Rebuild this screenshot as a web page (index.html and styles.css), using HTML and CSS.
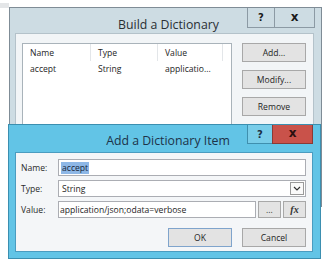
FILE: index.html
```html
<!DOCTYPE html>
<html>
<head>
<meta charset="utf-8">
<link rel="stylesheet" href="styles.css">
</head>
<body>
<div class="desk">
  <div class="strip"></div>
  <div class="win win-back">
    <div class="titlebar">
      <div class="title">Build a Dictionary</div>
      <div class="caps">
        <div class="cap cap-help">?</div>
        <div class="cap cap-close">x</div>
      </div>
    </div>
    <div class="client client-back">
      <div class="list">
        <div class="lrow lhead">
          <div class="c c1">Name</div>
          <div class="c c2">Type</div>
          <div class="c c3">Value</div>
          <div class="c c4"></div>
        </div>
        <div class="lrow">
          <div class="c c1">accept</div>
          <div class="c c2">String</div>
          <div class="c c3">applicatio...</div>
        </div>
      </div>
      <div class="sidebtns">
        <div class="btn">Add...</div>
        <div class="btn">Modify...</div>
        <div class="btn">Remove</div>
      </div>
    </div>
  </div>

  <div class="win win-front">
    <div class="titlebar tb-front">
      <div class="title title-front">Add a Dictionary Item</div>
      <div class="caps caps-front">
        <div class="cap cap-help help-front">?</div>
        <div class="cap cap-close close-front">x</div>
      </div>
    </div>
    <div class="client client-front">
      <div class="frow">
        <div class="lbl">Name:</div>
        <div class="inp"><span class="sel">accept</span></div>
      </div>
      <div class="frow">
        <div class="lbl">Type:</div>
        <div class="inp inp-combo"><span class="ctext">String</span>
          <span class="drop"><svg width="8" height="5" viewBox="0 0 8 5"><path d="M1 1 L4 4 L7 1" fill="none" stroke="#333" stroke-width="1.2"/></svg></span>
        </div>
      </div>
      <div class="frow">
        <div class="lbl">Value:</div>
        <div class="inp inp-val">application/json;odata=verbose</div>
        <div class="sbtn">...</div>
        <div class="sbtn fx">fx</div>
      </div>
      <div class="brow">
        <div class="btn btn-ok">OK</div>
        <div class="btn btn-cancel">Cancel</div>
      </div>
    </div>
  </div>
</div>
</body>
</html>
```

FILE: styles.css
```css
* { box-sizing: border-box; }
html, body { margin: 0; padding: 0; background: #ffffff; }
body { font-family: "Open Sans", "Noto Sans", sans-serif; font-size: 8.6px; color: #1e1e1e; }
.desk { position: relative; width: 334px; height: 271px; overflow: hidden; }
.strip { position: absolute; left: 0; top: 3px; width: 9px; height: 5px; background: #e4e6e8; }

.win { position: absolute; border: 1px solid #7f8c96; display: flex; flex-direction: column; }
.win-back { left: 9px; top: 7px; width: 313px; height: 200px; background: #cddce3; padding: 0 7px 0 5px; }
.win-front { left: 8px; top: 124px; width: 313px; height: 135px; background: #62c4e6; border-color: #3b8fb0; padding: 0 7px 6px 6px; }

.titlebar { position: relative; height: 25px; display: flex; align-items: center; justify-content: center; flex: none; padding-top: 8px; }
.tb-front { height: 27px; padding-top: 3px; }
.title { font-size: 12.3px; color: #2a2f33; margin-left: 8px; }
.title-front { color: #1d3349; }
.caps { position: absolute; right: -1px; top: 0; display: flex; }
.cap { height: 20px; display: flex; align-items: center; justify-content: center; font-weight: bold; font-family: "DejaVu Sans", sans-serif; border: 1px solid #8c9aa4; border-top: none; background: #cddce3; color: #1a1a1a; }
.cap-help { width: 27px; font-size: 10px; border-right: none; }
.cap-close { width: 41px; font-size: 12px; padding-bottom: 2px; }
.caps-front { right: 0; }
.help-front { height: 19px; width: 25px; background: #79cde9; border-color: #3f8fae; color: #1b2f44; }
.close-front { height: 19px; width: 41px; background: #c9524a; border-color: #8a3a36; color: #2a1010; }

.client { background: #f2f5f7; border: 1px solid #b4c2ca; flex: 1; }
.client-back { display: flex; padding: 9px 7px 0 6px; gap: 10px; }
.list { width: 211px; height: 160px; background: #fff; border: 1px solid #a9b3ba; }
.lrow { display: flex; height: 15px; align-items: center; }
.lhead { height: 17px; }
.c { padding-left: 7px; height: 100%; display: flex; align-items: center; }
.lhead .c { border-right: 1px solid #e3e6e9; }
.c1 { width: 68px; }
.c2 { width: 67px; }
.c3 { width: 65px; }
.c4 { flex: 1; border-right: none !important; }
.sidebtns { display: flex; flex-direction: column; gap: 8px; }
.btn { width: 64px; height: 19px; background: #e3e3e3; border: 1px solid #a8a8a8; display: flex; align-items: center; justify-content: center; color: #1e1e1e; }

.client-front { background: #f4f6f8; border-color: #4a9cc0; padding: 6px 6px 0 5px; display: flex; flex-direction: column; }
.frow { display: flex; align-items: center; height: 17px; margin-bottom: 4px; }
.lbl { width: 37px; color: #2a2a2a; }
.inp { flex: 1; height: 17px; background: #fff; border: 1px solid #abadb3; display: flex; align-items: center; padding-left: 2px; }
.sel { background: #8db7e6; color: #15263a; padding: 0 1px; }
.inp-combo { justify-content: space-between; padding-right: 1px; }
.ctext { padding-left: 1px; }
.drop { width: 14px; height: 13px; border: 1px solid #9a9a9a; display: flex; align-items: center; justify-content: center; background: #fafafa; }
.inp-val { padding-left: 1px; }
.sbtn { width: 23px; height: 17px; margin-left: 2px; background: #e3e3e3; border: 1px solid #a8a8a8; display: flex; align-items: center; justify-content: center; color: #333; }
.fx { font-family: "Liberation Serif", serif; font-style: italic; font-weight: bold; font-size: 10px; }
.brow { display: flex; justify-content: flex-end; gap: 10px; margin-top: 6px; }
.btn-ok { border-color: #7fa4cc; }
```
